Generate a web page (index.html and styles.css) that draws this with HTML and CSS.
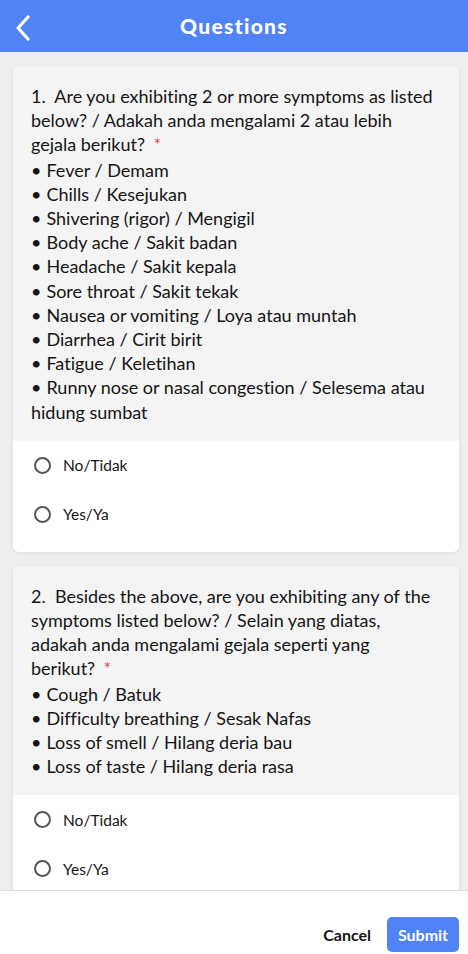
FILE: index.html
```html
<!DOCTYPE html>
<html>
<head>
<meta charset="utf-8">
<link rel="stylesheet" href="styles.css">
</head>
<body>
<div class="app">
  <header class="topbar">
    <button class="back" aria-label="Back">
      <svg width="16" height="26" viewBox="0 0 16 26"><path d="M13 2 L3 13 L13 24" fill="none" stroke="#fff" stroke-width="3.2" stroke-linecap="round" stroke-linejoin="round"/></svg>
    </button>
    <h1 class="title">Questions</h1>
  </header>
  <main class="content">
    <section class="card">
      <div class="question">
        <p class="q-text required">1.&nbsp; Are you exhibiting 2 or more symptoms as listed below? / Adakah anda mengalami 2 atau lebih gejala berikut?</p>
        <ul class="list">
          <li>Fever / Demam</li>
          <li>Chills / Kesejukan</li>
          <li>Shivering (rigor) / Mengigil</li>
          <li>Body ache / Sakit badan</li>
          <li>Headache / Sakit kepala</li>
          <li>Sore throat / Sakit tekak</li>
          <li>Nausea or vomiting / Loya atau muntah</li>
          <li>Diarrhea / Cirit birit</li>
          <li>Fatigue / Keletihan</li>
          <li>Runny nose or nasal congestion / Selesema atau hidung sumbat</li>
        </ul>
      </div>
      <div class="options">
        <label class="option"><span class="radio"></span>No/Tidak</label>
        <label class="option"><span class="radio"></span>Yes/Ya</label>
      </div>
    </section>
    <section class="card">
      <div class="question">
        <p class="q-text required">2.&nbsp; Besides the above, are you exhibiting any of the symptoms listed below? / Selain yang diatas, adakah anda mengalami gejala seperti yang berikut?</p>
        <ul class="list">
          <li>Cough / Batuk</li>
          <li>Difficulty breathing / Sesak Nafas</li>
          <li>Loss of smell / Hilang deria bau</li>
          <li>Loss of taste / Hilang deria rasa</li>
        </ul>
      </div>
      <div class="options">
        <label class="option"><span class="radio"></span>No/Tidak</label>
        <label class="option"><span class="radio"></span>Yes/Ya</label>
      </div>
    </section>
  </main>
  <footer class="footer">
    <button class="btn-cancel">Cancel</button>
    <button class="btn-submit">Submit</button>
  </footer>
</div>
</body>
</html>
```
FILE: styles.css
```css
* { box-sizing: border-box; }
html, body { margin: 0; padding: 0; }
body {
  font-family: Lato, "Noto Sans", sans-serif;
  font-variant-ligatures: none;
  color: #151515;
  background: #eceeef;
}
.app {
  width: 468px;
  height: 954px;
  display: flex;
  flex-direction: column;
  overflow: hidden;
}
.topbar {
  height: 52px;
  flex: none;
  background: #4f83f6;
  display: flex;
  align-items: center;
  justify-content: center;
  position: relative;
}
.back {
  position: absolute;
  left: 13px;
  top: 15px;
  background: none;
  border: 0;
  padding: 0;
  width: 20px;
  height: 26px;
}
.title {
  margin: 0 0 2px;
  color: #fff;
  font-size: 21px;
  font-weight: 900;
  letter-spacing: 1.3px;
}
.content {
  flex: 1;
  overflow: hidden;
  padding: 14px 9px 0 13px;
  display: flex;
  flex-direction: column;
  gap: 14px;
}
.card {
  flex: none;
  border-radius: 6px;
  overflow: hidden;
  background: #fff;
  box-shadow: 0 1px 4px rgba(0,0,0,0.08);
}
.question {
  background: #f4f4f4;
  padding: 18px 22px 17px 18px;
  font-size: 18px;
  line-height: 24.2px;
}
.q-text { margin: 0; }
.q-text.required::after {
  content: "\00a0\00a0*";
  color: #e04848;
  font-size: 17px;
}
.list {
  list-style: none;
  margin: 0;
  padding: 0;
}
.list li::before {
  content: "\2022";
  margin-right: 5px;
}
.options {
  padding: 0 0 13px 21px;
  display: flex;
  flex-direction: column;
}
.option {
  height: 49px;
  display: flex;
  align-items: center;
  gap: 12px;
  font-size: 15.5px;
  color: #151515;
}
.radio {
  width: 17px;
  height: 17px;
  border: 2px solid #555;
  border-radius: 50%;
}
.footer {
  height: 64px;
  flex: none;
  background: #fff;
  border-top: 1px solid #ddd;
  display: flex;
  align-items: center;
  justify-content: flex-end;
  gap: 16px;
  padding: 24px 9px 0 0;
}
.btn-cancel {
  background: none;
  border: 0;
  font-family: inherit;
  font-weight: 700;
  font-size: 16px;
  color: #151515;
  padding: 0;
}
.btn-submit {
  background: #4f83f6;
  border: 0;
  border-radius: 5px;
  color: #fff;
  font-family: inherit;
  font-weight: 700;
  font-size: 16px;
  width: 72px;
  height: 35px;
}
```
